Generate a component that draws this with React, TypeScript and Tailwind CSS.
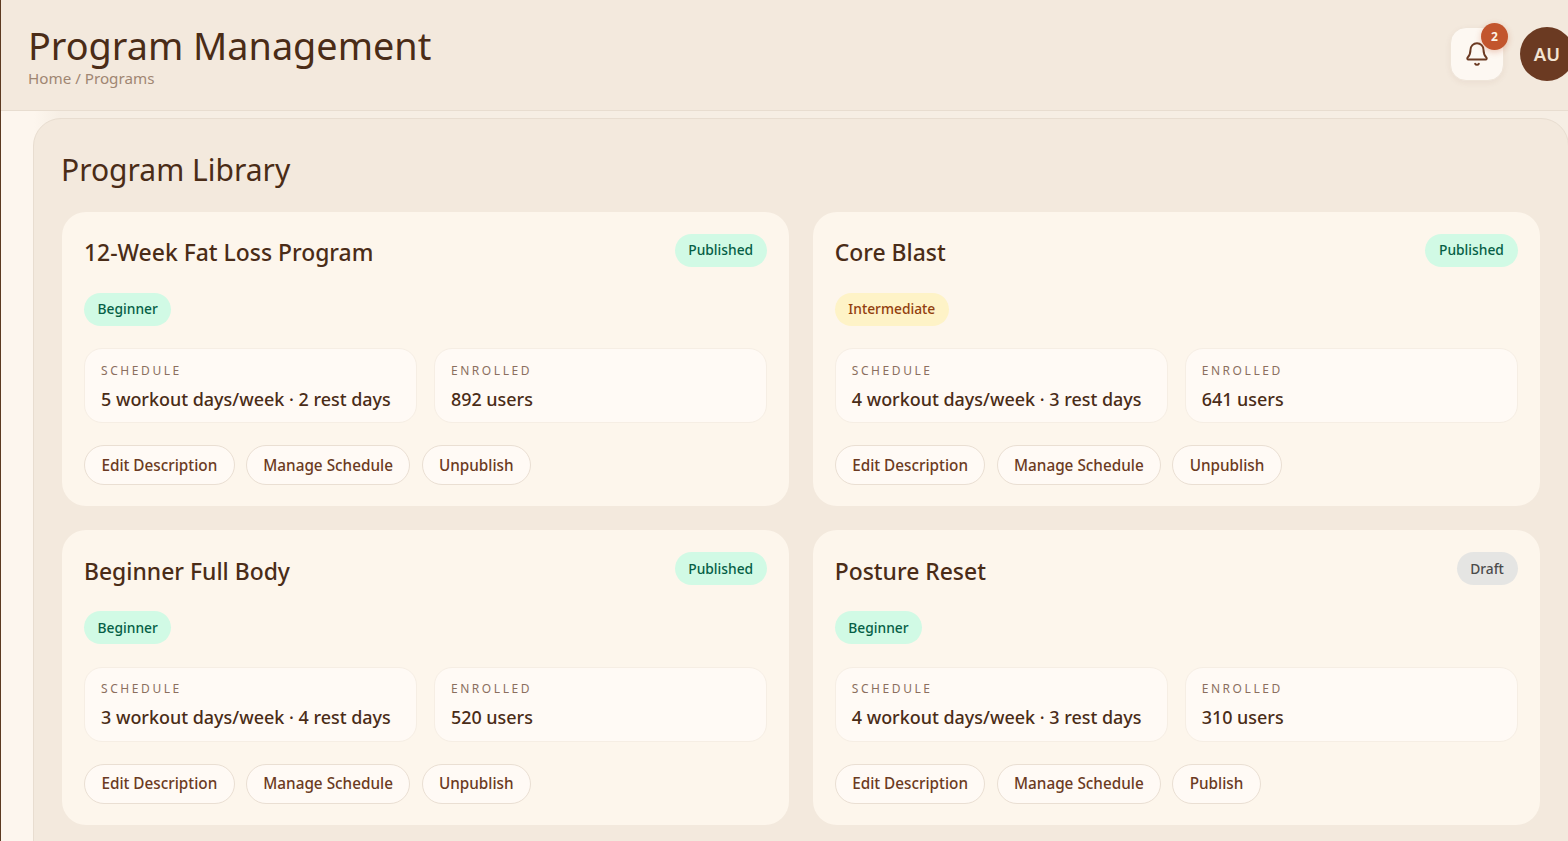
import { Bell } from 'lucide-react';

interface Program {
  title: string;
  status: 'Published' | 'Draft';
  level: 'Beginner' | 'Intermediate';
  schedule: string;
  enrolled: string;
  action: string;
}

const PROGRAMS: Program[] = [
  {
    title: '12-Week Fat Loss Program',
    status: 'Published',
    level: 'Beginner',
    schedule: '5 workout days/week · 2 rest days',
    enrolled: '892 users',
    action: 'Unpublish',
  },
  {
    title: 'Core Blast',
    status: 'Published',
    level: 'Intermediate',
    schedule: '4 workout days/week · 3 rest days',
    enrolled: '641 users',
    action: 'Unpublish',
  },
  {
    title: 'Beginner Full Body',
    status: 'Published',
    level: 'Beginner',
    schedule: '3 workout days/week · 4 rest days',
    enrolled: '520 users',
    action: 'Unpublish',
  },
  {
    title: 'Posture Reset',
    status: 'Draft',
    level: 'Beginner',
    schedule: '4 workout days/week · 3 rest days',
    enrolled: '310 users',
    action: 'Publish',
  },
];

function Pill({ label }: { label: string }) {
  let tone = 'bg-[#d1fae5] text-[#065f46]';
  if (label === 'Intermediate') tone = 'bg-[#fef3c7] text-[#92400e]';
  if (label === 'Draft') tone = 'bg-[#e5e5e3] text-[#4b4b4b]';
  return (
    <span className={`inline-flex h-[33px] items-center rounded-full px-[13.6px] text-[13.8px] font-medium ${tone}`}>
      {label}
    </span>
  );
}

function InfoBox({ label, value }: { label: string; value: string }) {
  return (
    <div className="h-[75px] rounded-[18px] border border-[#f6eee4] bg-[#fffaf5] px-4 pt-[12.3px]">
      <div className="text-[12px] leading-[18px] tracking-[0.215em] text-[#8b6f5e]">{label}</div>
      <div className="mt-[5.9px] text-[17.95px] leading-[26px] font-medium text-[#4a2c17]">{value}</div>
    </div>
  );
}

function ActionButton({ label }: { label: string }) {
  return (
    <button className="h-[40px] rounded-full border border-[#eadfd3] bg-[#fffaf5] px-[16.4px] text-[15.3px] font-medium text-[#6b3a22]">
      {label}
    </button>
  );
}

function ProgramCard({ program }: { program: Program }) {
  return (
    <div className="h-[294.4px] rounded-[24px] bg-[#fdf6ec] px-[22px] pt-[22px]">
      <div className="flex items-start justify-between">
        <h3 className="mt-[2.4px] text-[22.9px] leading-[34px] font-medium text-[#4a2c17]">{program.title}</h3>
        <Pill label={program.status} />
      </div>
      <div className="mt-[22.6px] flex">
        <Pill label={program.level} />
      </div>
      <div className="mt-[22.4px] grid grid-cols-2 gap-[17px]">
        <InfoBox label="SCHEDULE" value={program.schedule} />
        <InfoBox label="ENROLLED" value={program.enrolled} />
      </div>
      <div className="mt-[22px] flex gap-[11.2px]">
        <ActionButton label="Edit Description" />
        <ActionButton label="Manage Schedule" />
        <ActionButton label={program.action} />
      </div>
    </div>
  );
}

export default function App() {
  return (
    <div className="h-[841px] overflow-hidden border-l border-[#5c3a21] bg-[linear-gradient(90deg,#fdf6ee_33px,#f6eee4_60px)] font-['Noto_Sans','Open_Sans',sans-serif]">
      <header className="flex h-[111px] items-start justify-between border-b border-[#e8ddd0] bg-[#f3e9dd] pl-[27px]">
        <div className="pt-[21px]">
          <h1 className="text-[37.8px] leading-[50px] text-[#4a2c17]">Program Management</h1>
          <div className="-mt-[3px] text-[15.2px] leading-[20px] text-[#a08672]">Home / Programs</div>
        </div>
        <div className="flex items-center gap-4 pt-[27px]">
          <div className="relative flex h-[54px] w-[54px] items-center justify-center rounded-[16px] border border-[#efe5d9] bg-[#fdf8f2] shadow-[0_2px_6px_rgba(107,58,34,0.06)]">
            <Bell size={26} strokeWidth={1.8} className="text-[#6b3a22]" />
            <span className="absolute -top-[5px] -right-[5px] flex h-[27px] w-[27px] items-center justify-center rounded-full bg-[#c2552d] text-[12px] font-bold text-[#fdf3e7] shadow-[0_2px_6px_rgba(194,85,45,0.3)]">
              2
            </span>
          </div>
          <div className="-mr-[6px] flex h-[54px] w-[54px] items-center justify-center rounded-full bg-[#6b3a22] text-[18.5px] font-semibold text-[#f3e4d3]">
            AU
          </div>
        </div>
      </header>
      <main className="mt-[7px] -mr-[0.5px] ml-[32px] h-[760px] rounded-tl-[28px] rounded-tr-[28px] border border-[#e8ddd0] bg-[#f3e9dd] pt-[27px] pr-[28px] pl-[28px]">
        <h2 className="-ml-px text-[30px] leading-[48px] text-[#4a2c17]">Program Library</h2>
        <div className="mt-[18px] grid grid-cols-2 gap-x-[24px] gap-y-[24px]">
          {PROGRAMS.map((p) => (
            <ProgramCard key={p.title} program={p} />
          ))}
        </div>
      </main>
    </div>
  );
}
